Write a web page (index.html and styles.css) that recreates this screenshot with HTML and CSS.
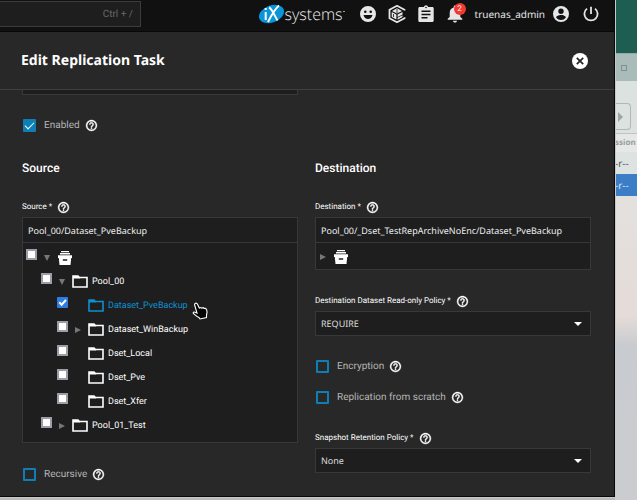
FILE: index.html
```html
<!DOCTYPE html>
<html lang="en">
<head>
<meta charset="utf-8">
<title>Edit Replication Task</title>
<link rel="stylesheet" href="styles.css">
</head>
<body>
<svg class="sprite" aria-hidden="true">
  <symbol id="help" viewBox="0 0 24 24"><path d="M11 18h2v-2h-2v2zm1-16C6.480 2 2 6.480 2 12s4.480 10 10 10 10-4.480 10-10S17.520 2 12 2zm0 18c-4.410 0-8-3.590-8-8s3.590-8 8-8 8 3.590 8 8-3.590 8-8 8zm0-14c-2.210 0-4 1.790-4 4h2c0-1.100.9-2 2-2s2 .9 2 2c0 2-3 1.750-3 5h2c0-2.250 3-2.500 3-5 0-2.210-1.790-4-4-4z" stroke="currentColor" stroke-width=".8"/></symbol>
  <symbol id="folder" viewBox="0 0 16 14"><path d="M1 2.500V1h5l1.500 1.500H15V12H1z" fill="none" stroke="currentColor" stroke-width="1.600"/><path d="M1 1h5l2 2.500H1z"/></symbol>
  <symbol id="pool" viewBox="0 0 16 16"><path d="M4 1h8v1.300H4zM3 3h10v1.500H3zM1 5.300h14V8h-.8l-.7 7h-11l-.7-7H1zM5.800 9.200v1.600h4.400V9.200z" fill-rule="evenodd"/></symbol>
</svg>
<div class="screen">
  <div class="window">
    <header class="topbar">
      <input class="search" type="text" placeholder="Ctrl + /" aria-label="Search">
      <nav class="tools">
        <a class="brand" href="#" aria-label="iXsystems">
          <svg class="brand-mark" viewBox="0 0 27 22" aria-hidden="true">
            <ellipse cx="13.500" cy="11" rx="13" ry="8.500" transform="rotate(-20 13.500 11)" fill="#0a95d8"/>
            <path d="M7.700 9v8M7.700 5v2" stroke="#fff" stroke-width="2" fill="none"/>
            <path d="M11 4.500c3 1 6 9 8.500 13M21 2.500C17 6 13 13 10 19" stroke="#fff" stroke-width="1.900" fill="none"/>
          </svg>
          <span>systems</span><i class="tm"></i>
        </a>
        <button class="tool smile" aria-label="Feedback"><svg viewBox="0 0 16 16"><path fill-rule="evenodd" d="M8 0a8 8 0 1 0 0 16A8 8 0 0 0 8 0zM5.300 4.500a1.300 1.300 0 1 1 0 2.600 1.300 1.300 0 0 1 0-2.600zm5.400 0a1.300 1.300 0 1 1 0 2.600 1.300 1.300 0 0 1 0-2.600zM3.500 9h9c-.6 2.500-2.300 4-4.500 4s-3.900-1.500-4.500-4z"/></svg></button>
        <button class="tool hex" aria-label="TrueCommand"><svg viewBox="0 0 18 18"><path d="M16.500 5.500V4.800L9 .8 1.500 4.800v8.400L9 17.200l7.500-4v-1" fill="none" stroke="currentColor" stroke-width="1.800"/><path d="M9 3.200l5 2.700-5 2.700-5-2.700zM3.700 7l4.700 2.500v5L3.700 12zM9.600 9.500L14.500 7v2.400L9.600 12zM9.600 12.800l4.900-2.600V12l-4.900 2.700z"/><path d="M9 4v4M5.500 9v3" stroke="#121212" stroke-width=".8"/></svg></button>
        <button class="tool clip" aria-label="Jobs"><svg viewBox="0 0 16 18"><path fill-rule="evenodd" d="M1.800 2h4a2.300 2.300 0 0 1 4.400 0h4c1 0 1.500.6 1.500 1.500v12c0 .9-.6 1.500-1.500 1.500H1.800C.9 17 .3 16.400.3 15.500v-12C.3 2.600.9 2 1.800 2zM8 1.700a.8.8 0 1 0 0 1.600.8.8 0 0 0 0-1.600zM3.500 5.500v1.600h9V5.500zm0 3.200v1.600h9V8.700zm0 3.200v1.600h6v-1.600z"/></svg></button>
        <button class="tool bell" aria-label="Alerts"><svg viewBox="0 0 16 18"><path d="M8 17.500c1.100 0 2-.8 2-1.800H6c0 1 .9 1.800 2 1.800zM13.300 12V7.700c0-2.700-1.500-4.700-4-5.300v-.6C9.300 1 8.700.5 8 .5s-1.300.5-1.300 1.300v.6c-2.500.6-4 2.600-4 5.300V12l-2 1.700v1h14.600v-1z"/></svg><span class="badge">2</span></button>
        <button class="account"><span>truenas_admin</span><svg viewBox="0 0 16 16"><path fill-rule="evenodd" d="M8 0a8 8 0 1 0 0 16A8 8 0 0 0 8 0zm0 2.600a2.700 2.700 0 1 1 0 5.400 2.700 2.700 0 0 1 0-5.400zM8 14a6 6 0 0 1-4.900-2.600C3.200 9.900 6.300 9 8 9s4.800.9 4.900 2.400A6 6 0 0 1 8 14z"/></svg></button>
        <button class="tool power" aria-label="Power"><svg viewBox="0 0 16 16"><path d="M8 .8V8M4 2.600a6.600 6.600 0 1 0 8 0" fill="none" stroke="currentColor" stroke-width="1.800"/></svg></button>
      </nav>
    </header>
    <div class="titlebar">
      <h1>Edit Replication Task</h1>
      <button class="close" aria-label="Close"><svg viewBox="0 0 16 16"><circle cx="8" cy="8" r="8"/><path d="M4.800 4.800l6.400 6.400M11.200 4.800l-6.400 6.400" stroke="#222" stroke-width="1.700"/></svg></button>
    </div>
    <main class="form">
      <div class="columns top-row"><div class="previous"></div></div>
      <div class="check enabled"><input type="checkbox" id="enabled" checked><label for="enabled">Enabled</label><svg class="help"><use href="#help"/></svg></div>
      <div class="columns">
        <section>
          <h2>Source</h2>
          <div class="caption"><label for="source">Source *</label><svg class="help"><use href="#help"/></svg></div>
          <div class="explorer">
            <input class="path" id="source" type="text" value="Pool_00/Dataset_PveBackup">
            <ul class="tree">
              <li class="node"><input type="checkbox" aria-label="Root"><button class="toggle open" aria-label="Collapse"></button><svg class="pool"><use href="#pool"/></svg></li>
              <li class="node level-1"><input type="checkbox" id="n1"><button class="toggle open" aria-label="Collapse"></button><svg class="folder"><use href="#folder"/></svg><label for="n1">Pool_00</label></li>
              <li class="node level-2 selected"><input type="checkbox" id="n2" checked><span class="toggle"></span><svg class="folder"><use href="#folder"/></svg><label for="n2">Dataset_PveBackup</label>
                <svg class="cursor" viewBox="0 0 16 18" aria-hidden="true"><path d="M3.200 1.500c1-.8 1.800-.3 2.300.7L7.300 6l1.500-.5 1 .6 1.500-.4 1 .8 1.400-.1c1.500 1.700 1.600 4 .8 6.300v2.800L8 17l-1-1.500c-2-.8-3.900-2.500-5.600-4-.6-1 .5-1.900 1.600-1.300l2 .8L2.800 3.500c-.4-.8-.2-1.500.4-2z" fill="#050505" stroke="#fff" stroke-width="1.100"/></svg></li>
              <li class="node level-2"><input type="checkbox" id="n3"><button class="toggle shut" aria-label="Expand"></button><svg class="folder"><use href="#folder"/></svg><label for="n3">Dataset_WinBackup</label></li>
              <li class="node level-2"><input type="checkbox" id="n4"><span class="toggle"></span><svg class="folder"><use href="#folder"/></svg><label for="n4">Dset_Local</label></li>
              <li class="node level-2"><input type="checkbox" id="n5"><span class="toggle"></span><svg class="folder"><use href="#folder"/></svg><label for="n5">Dset_Pve</label></li>
              <li class="node level-2"><input type="checkbox" id="n6"><span class="toggle"></span><svg class="folder"><use href="#folder"/></svg><label for="n6">Dset_Xfer</label></li>
              <li class="node level-1"><input type="checkbox" id="n7"><button class="toggle shut" aria-label="Expand"></button><svg class="folder"><use href="#folder"/></svg><label for="n7">Pool_01_Test</label></li>
            </ul>
          </div>
          <div class="check recursive"><input type="checkbox" id="recursive"><label for="recursive">Recursive</label><svg class="help"><use href="#help"/></svg></div>
        </section>
        <section>
          <h2>Destination</h2>
          <div class="caption"><label for="destination">Destination *</label><svg class="help"><use href="#help"/></svg></div>
          <div class="explorer">
            <input class="path" id="destination" type="text" value="Pool_00/_Dset_TestRepArchiveNoEnc/Dataset_PveBackup">
            <ul class="tree short">
              <li class="node"><button class="toggle shut" aria-label="Expand"></button><svg class="pool"><use href="#pool"/></svg></li>
            </ul>
          </div>
          <div class="caption spaced"><label for="policy">Destination Dataset Read-only Policy *</label><svg class="help"><use href="#help"/></svg></div>
          <div class="dropdown"><select id="policy"><option>REQUIRE</option></select></div>
          <div class="checks">
            <div class="check"><input type="checkbox" id="encryption"><label for="encryption">Encryption</label><svg class="help"><use href="#help"/></svg></div>
            <div class="check"><input type="checkbox" id="scratch"><label for="scratch">Replication from scratch</label><svg class="help"><use href="#help"/></svg></div>
          </div>
          <div class="caption spaced"><label for="retention">Snapshot Retention Policy *</label><svg class="help"><use href="#help"/></svg></div>
          <div class="dropdown"><select id="retention"><option>None</option></select></div>
        </section>
      </div>
    </main>
  </div>
  <aside class="desktop">
    <div class="wallpaper"></div>
    <div class="files-title"><span class="maximize"></span></div>
    <div class="files-tools"><span class="next"></span></div>
    <div class="files-head">ssion</div>
    <div class="files-row">-r--</div>
    <div class="files-row active">-r--</div>
    <div class="files-body"></div>
  </aside>
</div>
</body>
</html>
```

FILE: styles.css
```css
* { box-sizing: border-box; }

body {
  margin: 0;
  background: #b9babb;
  color: #fff;
  font: 10px/14px Roboto, sans-serif;
  text-rendering: geometricPrecision;
  overflow: hidden;
}

button, input, select {
  margin: 0;
  padding: 0;
  border: 0;
  border-radius: 0;
  background: none;
  color: inherit;
  font: inherit;
  text-rendering: inherit;
}

svg { display: block; flex: none; fill: currentColor; }
ul { margin: 0; padding: 0; list-style: none; }
.sprite { position: absolute; width: 0; height: 0; }

.screen { display: flex; height: 100vh; }

.window {
  display: flex;
  flex: 1;
  flex-direction: column;
  min-width: 0;
  margin-bottom: 3px;
  border-right: 1px solid #080808;
  border-bottom: 1px solid #080808;
  background: #282828;
  box-shadow: 0 0 0 1px #c9c9c9;
  z-index: 1;
}

/* Top bar */
.topbar {
  display: flex;
  flex: none;
  justify-content: space-between;
  height: 32px;
  background: #111;
  border-bottom: 1px solid #080808;
}

.search {
  width: 141px;
  height: 26px;
  margin-top: 1px;
  padding-right: 7px;
  border: 1px solid #3c3c3c;
  border-left: 0;
  background: #1e1e1e;
  text-align: right;
}
.search::placeholder { color: #686868; opacity: 1; }

.tools {
  display: flex;
  align-items: center;
  height: 28px;
  padding-right: 15px;
  color: #e6e6e6;
}

.brand {
  display: flex;
  align-items: center;
  margin-right: 15px;
  color: #eee;
  font: 300 16px/20px "Open Sans", sans-serif;
  text-decoration: none;
}
.brand-mark { width: 27px; height: 22px; }
.tm { width: 2px; height: 1px; margin-bottom: 6px; background: #999; }

.tool { position: relative; width: 16px; margin-right: 12px; }
.tool svg { width: 16px; height: 18px; }
.hex { width: 18px; }
.hex svg { width: 18px; }
.clip { margin-right: 13px; }
.bell { margin-right: 12px; }
.power { margin-right: 0; }
.badge {
  position: absolute;
  top: -2px;
  right: -3px;
  width: 12px;
  height: 12px;
  border-radius: 50%;
  background: #f4392f;
  color: #fff;
  font-size: 8px;
  line-height: 12px;
}
.account {
  display: flex;
  align-items: center;
  gap: 8px;
  margin-right: 14px;
  font: 10px/16px "Noto Sans", sans-serif;
}
.account svg { width: 16px; height: 16px; }

/* Panel title */
.titlebar {
  display: flex;
  flex: none;
  align-items: center;
  justify-content: space-between;
  height: 58px;
  padding: 0 26px 0 21px;
  border-bottom: 1px solid #404040;
}
h1 { margin: 0; font: 700 14px/20px "Noto Sans", sans-serif; }
.close svg { width: 16px; height: 16px; }

/* Form */
.form { flex: 1; min-height: 0; padding: 0 23px 0 22px; overflow: hidden; }
.columns { display: grid; grid-template-columns: 1fr 1fr; gap: 17px; }
.previous { height: 5px; border: 1px solid #383838; border-top: 0; background: #1e1e1e; }

h2 { margin: 0; font: 500 12px/16px Roboto, sans-serif; }

.help { width: 13px; height: 13px; }

.check { display: flex; align-items: center; height: 13px; padding-left: 1px; color: #b5b5b5; }
.check label { margin: 0 5px 0 8px; }
.check .help { color: #fff; }
.check input {
  appearance: none;
  width: 13px;
  height: 13px;
  border: 2px solid #0e7fb5;
  border-radius: 1px;
}
.check input:checked { background: #0e7fb5; }
.check input:checked::before {
  content: "";
  display: block;
  width: 8px;
  height: 4px;
  margin-top: 1px;
  border: solid #fff;
  border-width: 0 0 1px 1px;
  transform: rotate(-45deg);
}
.enabled { margin: 24px 0 28px; }
.recursive { margin-top: 25px; }
.checks { display: grid; gap: 18px; margin-top: 24px; }

.caption {
  display: flex;
  align-items: center;
  gap: 5px;
  height: 14px;
  margin: 24px 0 3px;
  font-size: 8px;
}
.caption.spaced { margin-top: 24px; }
.checks + .caption.spaced { margin-top: 27px; }

.explorer { border: 1px solid #383838; background: #1e1e1e; }
.path {
  display: block;
  width: 100%;
  height: 25px;
  padding: 0 5px;
  border-bottom: 1px solid #383838;
  color: #eee;
  font: 9px/14px "Noto Sans", sans-serif;
}

.tree { padding: 3px 3px 4px; font-size: 9px; }
.tree.short { padding: 2px 3px 0; }
.node { position: relative; display: flex; align-items: center; height: 24px; }
.level-1 { padding-left: 15px; }
.level-2 { padding-left: 31px; }
.node input {
  appearance: none;
  width: 11px;
  height: 11px;
  margin: 0 7px 7px 0;
  border: 2px solid #9d9da8;
  background: #fff;
}
.node input:checked { border: 0; border-radius: 1px; background: #2f7de1; }
.node input:checked::before {
  content: "";
  display: block;
  height: 11px;
  background: #fff;
  clip-path: polygon(14% 54%, 28% 40%, 42% 56%, 74% 20%, 88% 34%, 42% 84%);
}
.toggle { width: 12px; margin-right: 1px; }
.toggle::before { content: ""; display: block; width: 0; }
.open::before { border: 3px solid transparent; border-top: 6px solid #777; border-bottom: 0; }
.shut::before { border: 3px solid transparent; border-left: 6px solid #777; border-right: 0; }
.short .toggle { margin: 0 1px; }
.pool { width: 16px; height: 16px; }
.folder { width: 16px; height: 14px; margin-right: 4px; }
.selected { color: #0e8fd0; }
.cursor { position: absolute; top: 8px; left: 166px; width: 16px; height: 18px; }

.dropdown { display: grid; align-items: center; height: 25px; border: 1px solid #383838; background: #1e1e1e; }
.dropdown > *, .dropdown::after { grid-area: 1 / 1; }
.dropdown::after {
  content: "";
  justify-self: end;
  margin-right: 8px;
  border: 4px solid transparent;
  border-top-color: #fff;
  border-bottom: 0;
  pointer-events: none;
}
.dropdown select {
  appearance: none;
  width: 100%;
  height: 100%;
  padding: 0 5px;
  color: #ddd;
  font: 9px/14px "Noto Sans", sans-serif;
}

/* Desktop behind the window */
.desktop { display: flex; flex-direction: column; width: 22px; overflow: hidden; color: #555; white-space: nowrap; }
.wallpaper { height: 53px; background: #1e5d51; }
.files-title { height: 28px; padding: 11px 0 0 6px; border-top: 1px solid #91aaa5; background: #a9bcb9; }
.maximize { display: block; width: 6px; height: 6px; border: 1px solid #82928f; }
.files-tools { height: 52px; padding-top: 22px; background: #dbe2e0; }
.next { display: block; width: 16px; height: 27px; padding: 8px 0 0 3px; border: 1px solid #b2b7b5; border-left: 0; border-radius: 0 4px 4px 0; }
.next::before { content: ""; display: block; width: 0; border: 5px solid transparent; border-left-color: #a0a5a3; border-right: 0; }
.files-head { height: 19px; border-top: 1px solid #c0c5c3; background: #e5e8e6; color: #9a9d9b; font: 700 8px/18px "Noto Sans", sans-serif; }
.files-row { height: 22px; background: #dce3e1; font: 10px/22px "Noto Sans", sans-serif; }
.active { background: #3c7dc7; color: #d6e4f5; }
.files-body { flex: 1; background: linear-gradient(#e3e1de, #e5dbd8 120px, #c8cbd0 150px, #cbcccf); }
```
